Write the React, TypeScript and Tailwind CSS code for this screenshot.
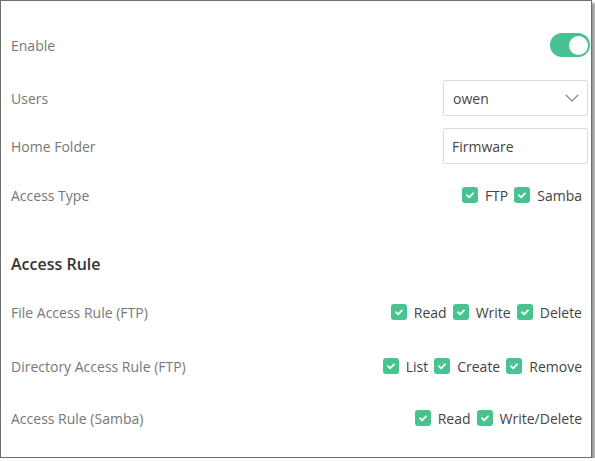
import { ChevronDown } from 'lucide-react'

const font = { fontFamily: '"Open Sans", "Noto Sans", sans-serif' }

function Check({ label }: { label: string }) {
  return (
    <span className="flex items-center">
      <span className="flex h-4 w-4 items-center justify-center rounded-[3px] bg-[#48c290]">
        <svg viewBox="0 0 16 16" className="h-4 w-4" fill="none" stroke="white" strokeWidth="1.8" strokeLinecap="round" strokeLinejoin="round">
          <path d="M5 8.2l2.1 2.1L11 6.3" />
        </svg>
      </span>
      <span className="ml-[7px] mr-[6px] text-[14px] text-[#444]">{label}</span>
    </span>
  )
}

function Row({ label, children, className }: { label: string; children?: React.ReactNode; className: string }) {
  return (
    <div className={`flex h-9 items-center justify-between ${className}`}>
      <span className="text-[14px] text-[#777]">{label}</span>
      <div className="flex items-center">{children}</div>
    </div>
  )
}

export default function App() {
  return (
    <div className="bg-white" style={font}>
      <div className="h-[458px] w-[592px] border border-[#6f6f6f] bg-white pl-[10px] pr-[3px] pt-[26px] shadow-[3px_3px_2px_#999]">
        <Row label="Enable" className="">
          <div className="-mr-[2px] flex h-[24px] w-[40px] items-center justify-end rounded-full bg-[#48c290] pr-[2px]">
            <div className="h-[19px] w-[19px] rounded-full bg-white" />
          </div>
        </Row>
        <Row label="Users" className="mt-[17px]">
          <div className="flex h-9 w-[145px] items-center justify-between rounded-[2px] border border-[#dcdcdc] pl-[9px] pr-[3px] text-[14px] text-[#444]">
            <span>owen</span>
            <ChevronDown className="h-6 w-6 text-[#888]" strokeWidth={1.1} />
          </div>
        </Row>
        <Row label="Home Folder" className="mt-[12px]">
          <div className="flex h-9 w-[145px] items-center rounded-[2px] border border-[#dcdcdc] pl-[8px] text-[14px] text-[#444]">
            Firmware
          </div>
        </Row>
        <Row label="Access Type" className="mt-[13px]">
          <Check label="FTP" />
          <Check label="Samba" />
        </Row>
        <div className="mt-[39px] flex h-6 items-center text-[16px] font-semibold text-[#333]">Access Rule</div>
        <Row label="File Access Rule (FTP)" className="mt-[18px]">
          <Check label="Read" />
          <Check label="Write" />
          <Check label="Delete" />
        </Row>
        <Row label="Directory Access Rule (FTP)" className="mt-[18px]">
          <Check label="List" />
          <Check label="Create" />
          <Check label="Remove" />
        </Row>
        <Row label="Access Rule (Samba)" className="mt-[16px]">
          <Check label="Read" />
          <Check label="Write/Delete" />
        </Row>
      </div>
    </div>
  )
}
